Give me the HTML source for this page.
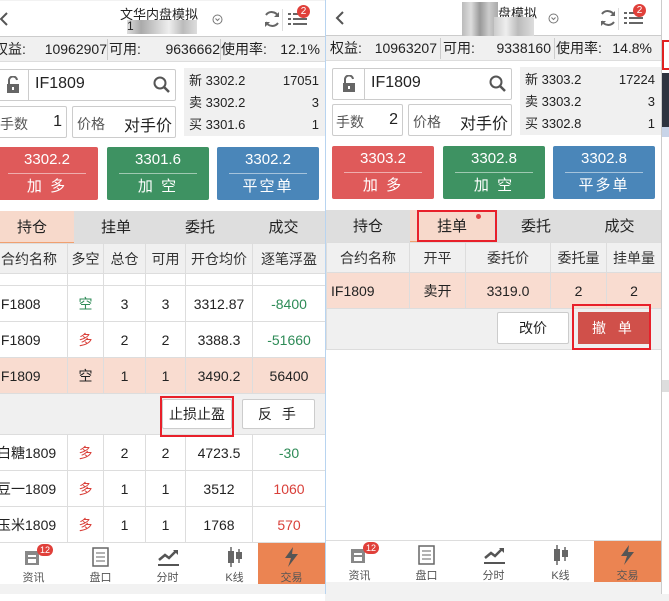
<!DOCTYPE html>
<html><head><meta charset="utf-8"><style>
*{box-sizing:border-box;margin:0;padding:0}
body{width:669px;height:594px;overflow:hidden;background:#f2f2f2;font-family:"Liberation Sans","Noto Sans CJK SC",sans-serif;color:#222;position:relative}
.p{position:absolute;width:335px;height:600px;background:#fff;overflow:hidden}
.a{position:absolute}
.hd{left:0;top:0;width:335px;height:36px;background:#fff;border-bottom:1px solid #ccc}
.acc{left:0;top:36px;width:335px;height:25px;background:#f0f0f0;border-bottom:1px solid #ddd;font-size:14px;line-height:25px;white-space:nowrap}
.acc span{position:absolute;top:0}
.box{border:1px solid #ccc;background:#fff;border-radius:2px}
.q{left:194px;top:67px;width:141px;height:68px;background:#f0f0f0;font-size:13px}
.q div{position:absolute;left:5px;width:130px;height:22px;line-height:22px}
.q b{font-weight:normal;position:absolute;right:0}
.btn{top:146px;width:102px;height:53px;color:#fff;text-align:center;border-radius:2px}
.btn .pr{font-size:15px;line-height:26px;height:27px;border-bottom:1px solid rgba(255,255,255,.5);margin:0 12px}
.btn .lb{font-size:15px;line-height:25px;letter-spacing:2px}
.tabs{left:0;top:210px;width:335px;height:33px;background:#dedede;font-size:15px}
.tabs div{position:absolute;top:0;height:33px;line-height:33px;text-align:center}
table{position:absolute;left:0;border-collapse:collapse;font-size:14px;table-layout:fixed}
td{border:1px solid #ddd;text-align:center;padding:0;white-space:nowrap;overflow:hidden}
tr.h td{background:#f0f0f0;height:30px;color:#333}
tr.r td{height:36px}
tr.r td:first-child{text-align:left;padding-left:6px}
tr.s td{background:#f9dcd0}
.g{color:#2e8b57}.rd{color:#d9403a}
.nav{left:0;width:335px;height:42px;background:#fff;border-top:1px solid #ddd;font-size:11px;color:#555}
.nav div{position:absolute;top:0;width:67px;height:42px;text-align:center}
.nav svg{position:absolute;left:23px;top:4px}
.nav span{position:absolute;left:0;width:67px;top:26px}
.red{border:2px solid #e8202a;position:absolute}
</style></head><body>

<!-- LEFT PANEL -->
<div class="p" style="left:-10px;top:1px">
 <div class="a hd">
  <svg class="a" style="left:8px;top:10px" width="12" height="16"><path d="M9 2 L3 8 L9 14" stroke="#555" stroke-width="2" fill="none"/></svg>
  <div class="a" style="left:130px;top:3px;font-size:13px">文华内盘模拟</div>
  <div class="a" style="left:137px;top:19px;width:70px;height:14px;background:linear-gradient(90deg,#ddd,#aaa 20%,#ccc 40%,#eee 60%,#bbb 80%,#ddd)"></div>
  <div class="a" style="left:137px;top:18px;font-size:12px">1</div>
  <svg class="a" style="left:222px;top:13px" width="11" height="11"><circle cx="5.5" cy="5.5" r="4.5" stroke="#777" fill="none"/><path d="M3.5 4.5 L5.5 6.5 L7.5 4.5" stroke="#777" fill="none"/></svg>
  <svg class="a" style="left:272px;top:8px" width="20" height="20"><path d="M16 7 A7 7 0 0 0 4 6 M4 13 A7 7 0 0 0 16 14" stroke="#666" stroke-width="2" fill="none"/><path d="M17 3 L17 8 L12 8Z M3 18 L3 13 L8 13Z" fill="#666"/></svg>
  <div class="a" style="left:292px;top:8px;width:1px;height:22px;background:#ddd"></div>
  <svg class="a" style="left:298px;top:10px" width="20" height="16"><g fill="#666"><rect x="0" y="2" width="3" height="2"/><rect x="5" y="2" width="14" height="2"/><rect x="0" y="7" width="3" height="2"/><rect x="5" y="7" width="14" height="2"/><rect x="0" y="12" width="3" height="2"/><rect x="5" y="12" width="14" height="2"/></g></svg>
  <div class="a" style="left:307px;top:4px;width:13px;height:13px;border-radius:7px;background:#e0403a;color:#fff;font-size:10px;line-height:13px;text-align:center">2</div>
 </div>
 <div class="a acc"><span style="left:4px">权益:</span><span style="left:47px;width:70px;text-align:right">10962907</span><span style="left:117px;top:2px;height:21px;width:1px;background:#ccc"></span><span style="left:119px">可用:</span><span style="left:160px;width:70px;text-align:right">9636662</span><span style="left:230px;top:2px;height:21px;width:1px;background:#ccc"></span><span style="left:231px">使用率:</span><span style="left:288px;width:42px;text-align:right">12.1%</span></div>
 <div class="a box" style="left:6px;top:68px;width:180px;height:32px">
  <div class="a" style="left:31px;top:0;width:1px;height:30px;background:#ccc"></div>
  <svg class="a" style="left:9px;top:6px" width="14" height="18"><path d="M3 8 V5 A4 4 0 0 1 11 4" stroke="#666" stroke-width="2" fill="none"/><rect x="1" y="8" width="12" height="9" fill="#666"/><rect x="6" y="11" width="2" height="3" fill="#fff"/></svg>
  <div class="a" style="left:38px;top:5px;font-size:16px">IF1809</div>
  <svg class="a" style="left:156px;top:6px" width="18" height="18"><circle cx="7" cy="7" r="5.5" stroke="#555" stroke-width="2" fill="none"/><path d="M11 11 L16 16" stroke="#555" stroke-width="2.5"/></svg>
 </div>
 <div class="a box" style="left:6px;top:105px;width:71px;height:32px;font-size:14px"><span class="a" style="left:3px;top:7px;color:#555">手数</span><span class="a" style="right:4px;top:6px;font-size:16px">1</span></div>
 <div class="a box" style="left:82px;top:105px;width:104px;height:32px;font-size:14px"><span class="a" style="left:4px;top:7px;color:#555">价格</span><span class="a" style="right:3px;top:5px;font-size:16px">对手价</span></div>
 <div class="a q"><div style="top:2px">新 3302.2<b>17051</b></div><div style="top:24px">卖 3302.2<b>3</b></div><div style="top:46px">买 3301.6<b>1</b></div></div>
 <div class="a btn" style="left:6px;background:#df5a5a"><div class="pr">3302.2</div><div class="lb">加 多</div></div>
 <div class="a btn" style="left:117px;background:#3e9262"><div class="pr">3301.6</div><div class="lb">加 空</div></div>
 <div class="a btn" style="left:227px;background:#4a86b9"><div class="pr">3302.2</div><div class="lb">平空单</div></div>
 <div class="a tabs"><div style="left:0;width:84px;background:#f7d9cb;border-bottom:2px solid #f0a070">持仓</div><div style="left:84px;width:84px">挂单</div><div style="left:168px;width:84px">委托</div><div style="left:252px;width:83px">成交</div></div>
 <table style="top:242px;width:335px">
  <colgroup><col style="width:77px"><col style="width:36px"><col style="width:42px"><col style="width:40px"><col style="width:67px"><col style="width:73px"></colgroup>
  <tr class="h"><td>合约名称</td><td>多空</td><td>总仓</td><td>可用</td><td>开仓均价</td><td>逐笔浮盈</td></tr>
  <tr><td style="height:12px"></td><td></td><td></td><td></td><td></td><td></td></tr>
  <tr class="r"><td>IF1808</td><td class="g">空</td><td>3</td><td>3</td><td>3312.87</td><td class="g">-8400</td></tr>
  <tr class="r"><td>IF1809</td><td class="rd">多</td><td>2</td><td>2</td><td>3388.3</td><td class="g">-51660</td></tr>
  <tr class="r s"><td>IF1809</td><td>空</td><td>1</td><td>1</td><td>3490.2</td><td>56400</td></tr>
  <tr><td colspan="6" style="height:41px;background:#f0f0f0"></td></tr>
  <tr class="r"><td>白糖1809</td><td class="rd">多</td><td>2</td><td>2</td><td>4723.5</td><td class="g">-30</td></tr>
  <tr class="r"><td>豆一1809</td><td class="rd">多</td><td>1</td><td>1</td><td>3512</td><td class="rd">1060</td></tr>
  <tr class="r"><td>玉米1809</td><td class="rd">多</td><td>1</td><td>1</td><td>1768</td><td class="rd">570</td></tr>
 </table>
 <div class="a box" style="left:172px;top:398px;width:70px;height:30px;font-size:14px;text-align:center;line-height:28px">止损止盈</div>
 <div class="red" style="left:170px;top:395px;width:74px;height:41px"></div>
 <div class="a box" style="left:252px;top:398px;width:73px;height:30px;font-size:14px;text-align:center;line-height:28px;letter-spacing:3px">反 手</div>
 <div class="a nav" style="top:541px">
  <div style="left:10px"><svg width="22" height="20"><rect x="2" y="4" width="14" height="14" fill="#888"/><rect x="5" y="8" width="8" height="2" fill="#fff"/><rect x="5" y="12" width="8" height="4" fill="#fff"/></svg><div class="a" style="left:37px;top:1px;width:16px;height:12px;border-radius:6px;background:#e0403a;color:#fff;font-size:9px;line-height:12px">12</div><span>资讯</span></div>
  <div style="left:77px"><svg width="22" height="20"><rect x="3" y="1" width="15" height="18" stroke="#666" stroke-width="1.5" fill="none"/><path d="M6 6h9M6 10h9M6 14h9" stroke="#666"/></svg><span>盘口</span></div>
  <div style="left:144px"><svg width="24" height="20"><path d="M2 13 L8 8 L12 11 L19 4" stroke="#555" stroke-width="2.5" fill="none"/><path d="M16 3h5v5z" fill="#555"/><rect x="1" y="17" width="21" height="2" fill="#555"/></svg><span>分时</span></div>
  <div style="left:211px"><svg width="22" height="20"><path d="M7 0v20M15 2v14" stroke="#666" stroke-width="1.5"/><rect x="4" y="4" width="6" height="12" fill="#666"/><rect x="12" y="5" width="6" height="7" fill="#666"/></svg><span>K线</span></div>
  <div style="left:268px;background:#eb8452"><svg width="22" height="20"><path d="M12 0 L4 11 H10 L7 20 L17 7 H11 Z" fill="#555"/></svg><span>交易</span></div>
 </div>
</div>
<div class="a" style="left:325px;top:0;width:1px;height:594px;background:#b8d4f0"></div>

<!-- RIGHT PANEL -->
<div class="p" style="left:326px;top:0">
 <div class="a hd">
  <svg class="a" style="left:8px;top:10px" width="12" height="16"><path d="M9 2 L3 8 L9 14" stroke="#555" stroke-width="2" fill="none"/></svg>
  <div class="a" style="left:172px;top:3px;font-size:13px">盘模拟</div>
  <div class="a" style="left:136px;top:2px;width:36px;height:36px;background:linear-gradient(90deg,#bbb,#ddd 25%,#999 50%,#ccc 75%,#aaa)"></div>
  <div class="a" style="left:168px;top:17px;width:40px;height:19px;background:linear-gradient(90deg,#ccc,#eee 30%,#bbb 60%,#ddd)"></div>
  <svg class="a" style="left:222px;top:13px" width="11" height="11"><circle cx="5.5" cy="5.5" r="4.5" stroke="#777" fill="none"/><path d="M3.5 4.5 L5.5 6.5 L7.5 4.5" stroke="#777" fill="none"/></svg>
  <svg class="a" style="left:272px;top:8px" width="20" height="20"><path d="M16 7 A7 7 0 0 0 4 6 M4 13 A7 7 0 0 0 16 14" stroke="#666" stroke-width="2" fill="none"/><path d="M17 3 L17 8 L12 8Z M3 18 L3 13 L8 13Z" fill="#666"/></svg>
  <div class="a" style="left:292px;top:8px;width:1px;height:22px;background:#ddd"></div>
  <svg class="a" style="left:298px;top:10px" width="20" height="16"><g fill="#666"><rect x="0" y="2" width="3" height="2"/><rect x="5" y="2" width="14" height="2"/><rect x="0" y="7" width="3" height="2"/><rect x="5" y="7" width="14" height="2"/><rect x="0" y="12" width="3" height="2"/><rect x="5" y="12" width="14" height="2"/></g></svg>
  <div class="a" style="left:307px;top:4px;width:13px;height:13px;border-radius:7px;background:#e0403a;color:#fff;font-size:10px;line-height:13px;text-align:center">2</div>
 </div>
 <div class="a acc"><span style="left:4px">权益:</span><span style="left:41px;width:70px;text-align:right">10963207</span><span style="left:114px;top:2px;height:21px;width:1px;background:#ccc"></span><span style="left:117px">可用:</span><span style="left:155px;width:70px;text-align:right">9338160</span><span style="left:228px;top:2px;height:21px;width:1px;background:#ccc"></span><span style="left:230px">使用率:</span><span style="left:282px;width:44px;text-align:right">14.8%</span></div>
 <div class="a box" style="left:6px;top:68px;width:180px;height:32px">
  <div class="a" style="left:31px;top:0;width:1px;height:30px;background:#ccc"></div>
  <svg class="a" style="left:9px;top:6px" width="14" height="18"><path d="M3 8 V5 A4 4 0 0 1 11 4" stroke="#666" stroke-width="2" fill="none"/><rect x="1" y="8" width="12" height="9" fill="#666"/><rect x="6" y="11" width="2" height="3" fill="#fff"/></svg>
  <div class="a" style="left:38px;top:5px;font-size:16px">IF1809</div>
  <svg class="a" style="left:156px;top:6px" width="18" height="18"><circle cx="7" cy="7" r="5.5" stroke="#555" stroke-width="2" fill="none"/><path d="M11 11 L16 16" stroke="#555" stroke-width="2.5"/></svg>
 </div>
 <div class="a box" style="left:6px;top:104px;width:71px;height:32px;font-size:14px"><span class="a" style="left:3px;top:7px;color:#555">手数</span><span class="a" style="right:4px;top:6px;font-size:16px">2</span></div>
 <div class="a box" style="left:82px;top:104px;width:104px;height:32px;font-size:14px"><span class="a" style="left:4px;top:7px;color:#555">价格</span><span class="a" style="right:3px;top:5px;font-size:16px">对手价</span></div>
 <div class="a q"><div style="top:2px">新 3303.2<b>17224</b></div><div style="top:24px">卖 3303.2<b>3</b></div><div style="top:46px">买 3302.8<b>1</b></div></div>
 <div class="a btn" style="left:6px;background:#df5a5a"><div class="pr">3303.2</div><div class="lb">加 多</div></div>
 <div class="a btn" style="left:117px;background:#3e9262"><div class="pr">3302.8</div><div class="lb">加 空</div></div>
 <div class="a btn" style="left:227px;background:#4a86b9"><div class="pr">3302.8</div><div class="lb">平多单</div></div>
 <div class="a tabs"><div style="left:0;width:84px">持仓</div><div style="left:84px;width:84px;background:#f7d9cb;border-bottom:2px solid #f0a070">挂单</div><div style="left:168px;width:84px">委托</div><div style="left:252px;width:83px">成交</div></div>
 <div class="red" style="left:91px;top:210px;width:80px;height:32px"></div>
 <div class="a" style="left:150px;top:214px;width:5px;height:5px;border-radius:3px;background:#e04040"></div>
 <table style="top:242px;width:335px">
  <colgroup><col style="width:83px"><col style="width:56px"><col style="width:85px"><col style="width:56px"><col style="width:55px"></colgroup>
  <tr class="h"><td>合约名称</td><td>开平</td><td>委托价</td><td>委托量</td><td>挂单量</td></tr>
  <tr class="r s"><td style="padding-left:4px">IF1809</td><td>卖开</td><td>3319.0</td><td>2</td><td>2</td></tr>
  <tr><td colspan="5" style="height:41px;background:#f0f0f0"></td></tr>
 </table>
 <div class="a box" style="left:171px;top:312px;width:72px;height:32px;font-size:14px;text-align:center;line-height:30px">改价</div>
 <div class="a" style="left:252px;top:312px;width:72px;height:32px;background:#d0504a;color:#fff;font-size:14px;text-align:center;line-height:32px;letter-spacing:4px">撤 单</div>
 <div class="red" style="left:246px;top:304px;width:79px;height:46px"></div>
 <div class="a nav" style="top:540px">
  <div style="left:0"><svg width="22" height="20"><rect x="2" y="4" width="14" height="14" fill="#888"/><rect x="5" y="8" width="8" height="2" fill="#fff"/><rect x="5" y="12" width="8" height="4" fill="#fff"/></svg><div class="a" style="left:37px;top:1px;width:16px;height:12px;border-radius:6px;background:#e0403a;color:#fff;font-size:9px;line-height:12px">12</div><span>资讯</span></div>
  <div style="left:67px"><svg width="22" height="20"><rect x="3" y="1" width="15" height="18" stroke="#666" stroke-width="1.5" fill="none"/><path d="M6 6h9M6 10h9M6 14h9" stroke="#666"/></svg><span>盘口</span></div>
  <div style="left:134px"><svg width="24" height="20"><path d="M2 13 L8 8 L12 11 L19 4" stroke="#555" stroke-width="2.5" fill="none"/><path d="M16 3h5v5z" fill="#555"/><rect x="1" y="17" width="21" height="2" fill="#555"/></svg><span>分时</span></div>
  <div style="left:201px"><svg width="22" height="20"><path d="M7 0v20M15 2v14" stroke="#666" stroke-width="1.5"/><rect x="4" y="4" width="6" height="12" fill="#666"/><rect x="12" y="5" width="6" height="7" fill="#666"/></svg><span>K线</span></div>
  <div style="left:268px;background:#eb8452"><svg width="22" height="20"><path d="M12 0 L4 11 H10 L7 20 L17 7 H11 Z" fill="#555"/></svg><span>交易</span></div>
 </div>
 <div class="a" style="left:0;top:582px;width:335px;height:20px;background:#f2f2f2"></div>
</div>
<div class="a" style="left:0;top:584px;width:325px;height:10px;background:#f2f2f2"></div>

<!-- right strip -->
<div class="a" style="left:661px;top:0;width:8px;height:594px;background:#fff;border-left:1px solid #ccc"></div>
<div class="a" style="left:662px;top:40px;width:7px;height:30px;border:2px solid #e02020;border-right:none"></div>
<div class="a" style="left:662px;top:73px;width:7px;height:54px;background:#2e3440"></div>
<div class="a" style="left:662px;top:127px;width:7px;height:10px;background:#c8d4e8"></div>
<div class="a" style="left:662px;top:380px;width:7px;height:12px;background:#ddd"></div>
</body></html>
